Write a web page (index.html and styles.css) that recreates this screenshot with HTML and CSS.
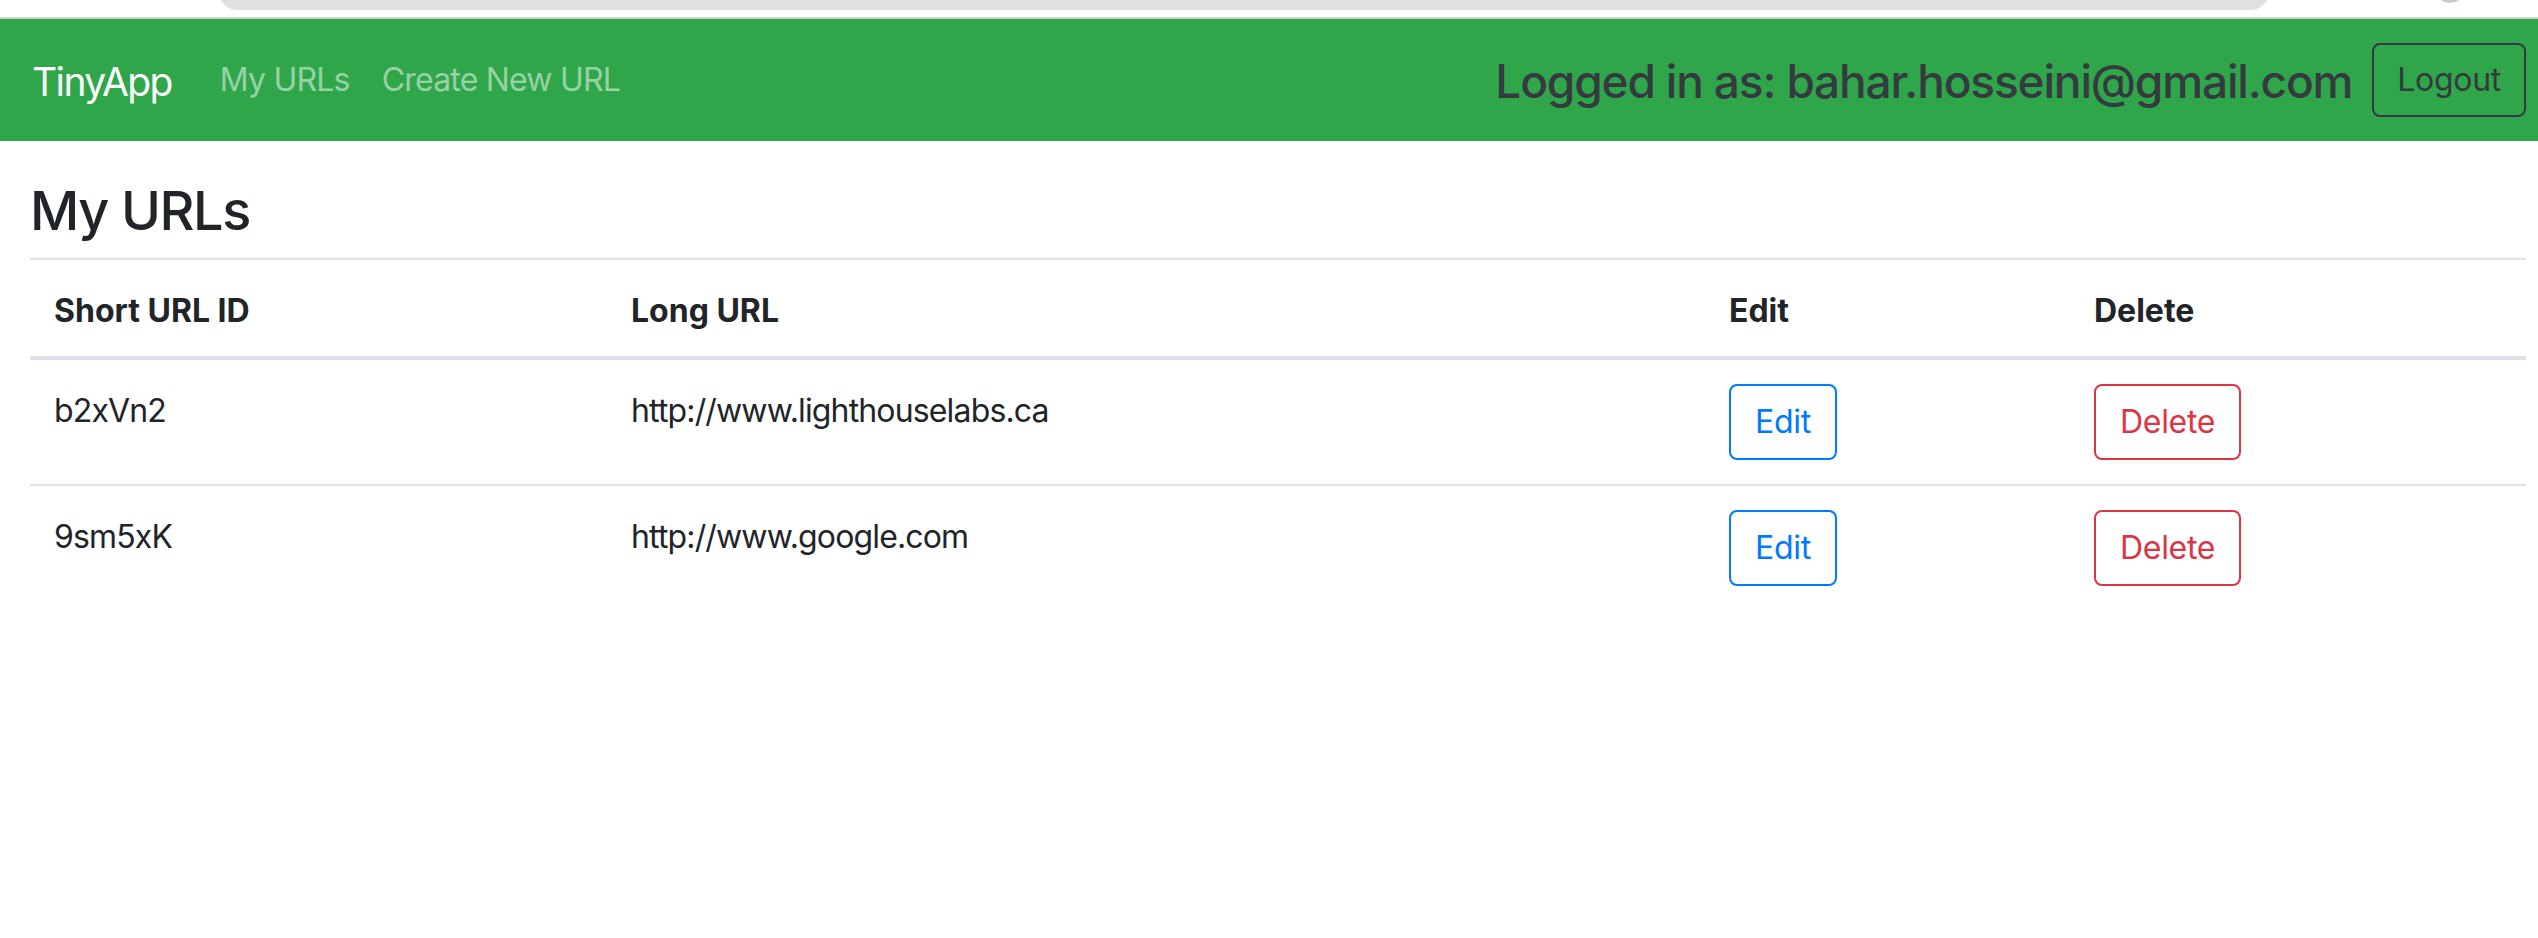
FILE: index.html
```html
<!DOCTYPE html>
<html lang="en">
<head>
<meta charset="utf-8">
<title>TinyApp</title>
<link rel="stylesheet" href="styles.css">
</head>
<body>
<div class="chrome">
  <div class="addr"></div>
  <div class="avatar"></div>
</div>
<nav class="navbar">
  <a class="brand" href="#">TinyApp</a>
  <ul class="nav">
    <li><a class="nav-link" href="#">My URLs</a></li>
    <li><a class="nav-link" href="#">Create New URL</a></li>
  </ul>
  <div class="user">
    <h4 class="user-name">Logged in as: bahar.hosseini@gmail.com</h4>
    <button class="btn btn-dark">Logout</button>
  </div>
</nav>
<main class="container">
  <h3 class="title">My URLs</h3>
  <table class="table">
    <colgroup>
      <col class="c1"><col class="c2"><col class="c3"><col class="c4">
    </colgroup>
    <thead>
      <tr><th>Short URL ID</th><th>Long URL</th><th>Edit</th><th>Delete</th></tr>
    </thead>
    <tbody>
      <tr>
        <td>b2xVn2</td>
        <td>http://www.lighthouselabs.ca</td>
        <td class="cell-btn"><button class="btn btn-blue">Edit</button></td>
        <td class="cell-btn"><button class="btn btn-red">Delete</button></td>
      </tr>
      <tr>
        <td>9sm5xK</td>
        <td>http://www.google.com</td>
        <td class="cell-btn"><button class="btn btn-blue">Edit</button></td>
        <td class="cell-btn"><button class="btn btn-red">Delete</button></td>
      </tr>
    </tbody>
  </table>
</main>
</body>
</html>
```
FILE: styles.css
```css
* { box-sizing: border-box; }
html, body { margin: 0; padding: 0; background: #fff; }
body {
  font-family: Inter, "Liberation Sans", sans-serif;
  color: #212529;
  font-size: 32px;
  line-height: 48px;
  width: 2538px;
  overflow: hidden;
}

.chrome {
  height: 19px;
  border-bottom: 2px solid #d0d0d0;
  display: flex;
  align-items: flex-start;
  overflow: hidden;
}
.addr {
  margin-left: 218px;
  width: 2052px;
  height: 40px;
  margin-top: -30px;
  background: #e0e0e0;
  border-radius: 20px;
}
.avatar {
  margin-left: 165px;
  width: 30px;
  height: 30px;
  margin-top: -27px;
  border-radius: 50%;
  background: #c7cbd5;
}

.navbar {
  height: 122px;
  background: #30a64a;
  display: flex;
  align-items: center;
  padding: 16px 12px 16px 32px;
}
.brand {
  color: #fff;
  text-decoration: none;
  font-size: 39px;
  line-height: 60px;
  margin-right: 32px;
  letter-spacing: -1.6px;
  position: relative;
  top: 2px;
}
.nav {
  list-style: none;
  margin: 0;
  padding: 0;
  display: flex;
}
.nav-link {
  display: block;
  padding: 16px;
  color: rgba(255, 255, 255, 0.5);
  text-decoration: none;
  font-size: 32px;
  line-height: 48px;
  letter-spacing: -0.8px;
}
.user {
  margin-left: auto;
  display: flex;
  align-items: center;
}
.user-name {
  margin: 0 20px 0 0;
  font-size: 46px;
  line-height: 58px;
  font-weight: 500;
  color: #343a40;
  letter-spacing: -1.15px;
  position: relative;
  top: 1px;
}

.btn {
  font-family: inherit;
  font-size: 32px;
  line-height: 48px;
  padding: 12px 24px;
  border: 2px solid;
  border-radius: 8px;
  background: transparent;
  cursor: pointer;
  letter-spacing: -0.3px;
}
.btn-dark { color: #343a40; border-color: #343a40; padding: 11px 23px; }
.btn-blue { color: #007bff; border-color: #007bff; }
.btn-red { color: #dc3545; border-color: #dc3545; }

.container {
  padding: 36px 12px 0 30px;
}
.title {
  margin: 0 0 14px;
  font-size: 54px;
  line-height: 67px;
  font-weight: 500;
  letter-spacing: -1.4px;
}

.table {
  width: 2496px;
  border-collapse: collapse;
  table-layout: fixed;
}
.c1 { width: 577px; }
.c2 { width: 1098px; }
.c3 { width: 365px; }
.c4 { width: 456px; }
.table th,
.table td {
  text-align: left;
  vertical-align: top;
  padding: 27px 24px 21px;
  border-top: 2px solid #dee2e6;
  letter-spacing: -0.85px;
}
.table td.cell-btn {
  padding: 24px;
}
.table th {
  font-weight: 700;
  letter-spacing: 0;
  border-bottom: 4px solid #dee2e6;
}
.table tbody tr:first-child td { border-top: 0; }
```
